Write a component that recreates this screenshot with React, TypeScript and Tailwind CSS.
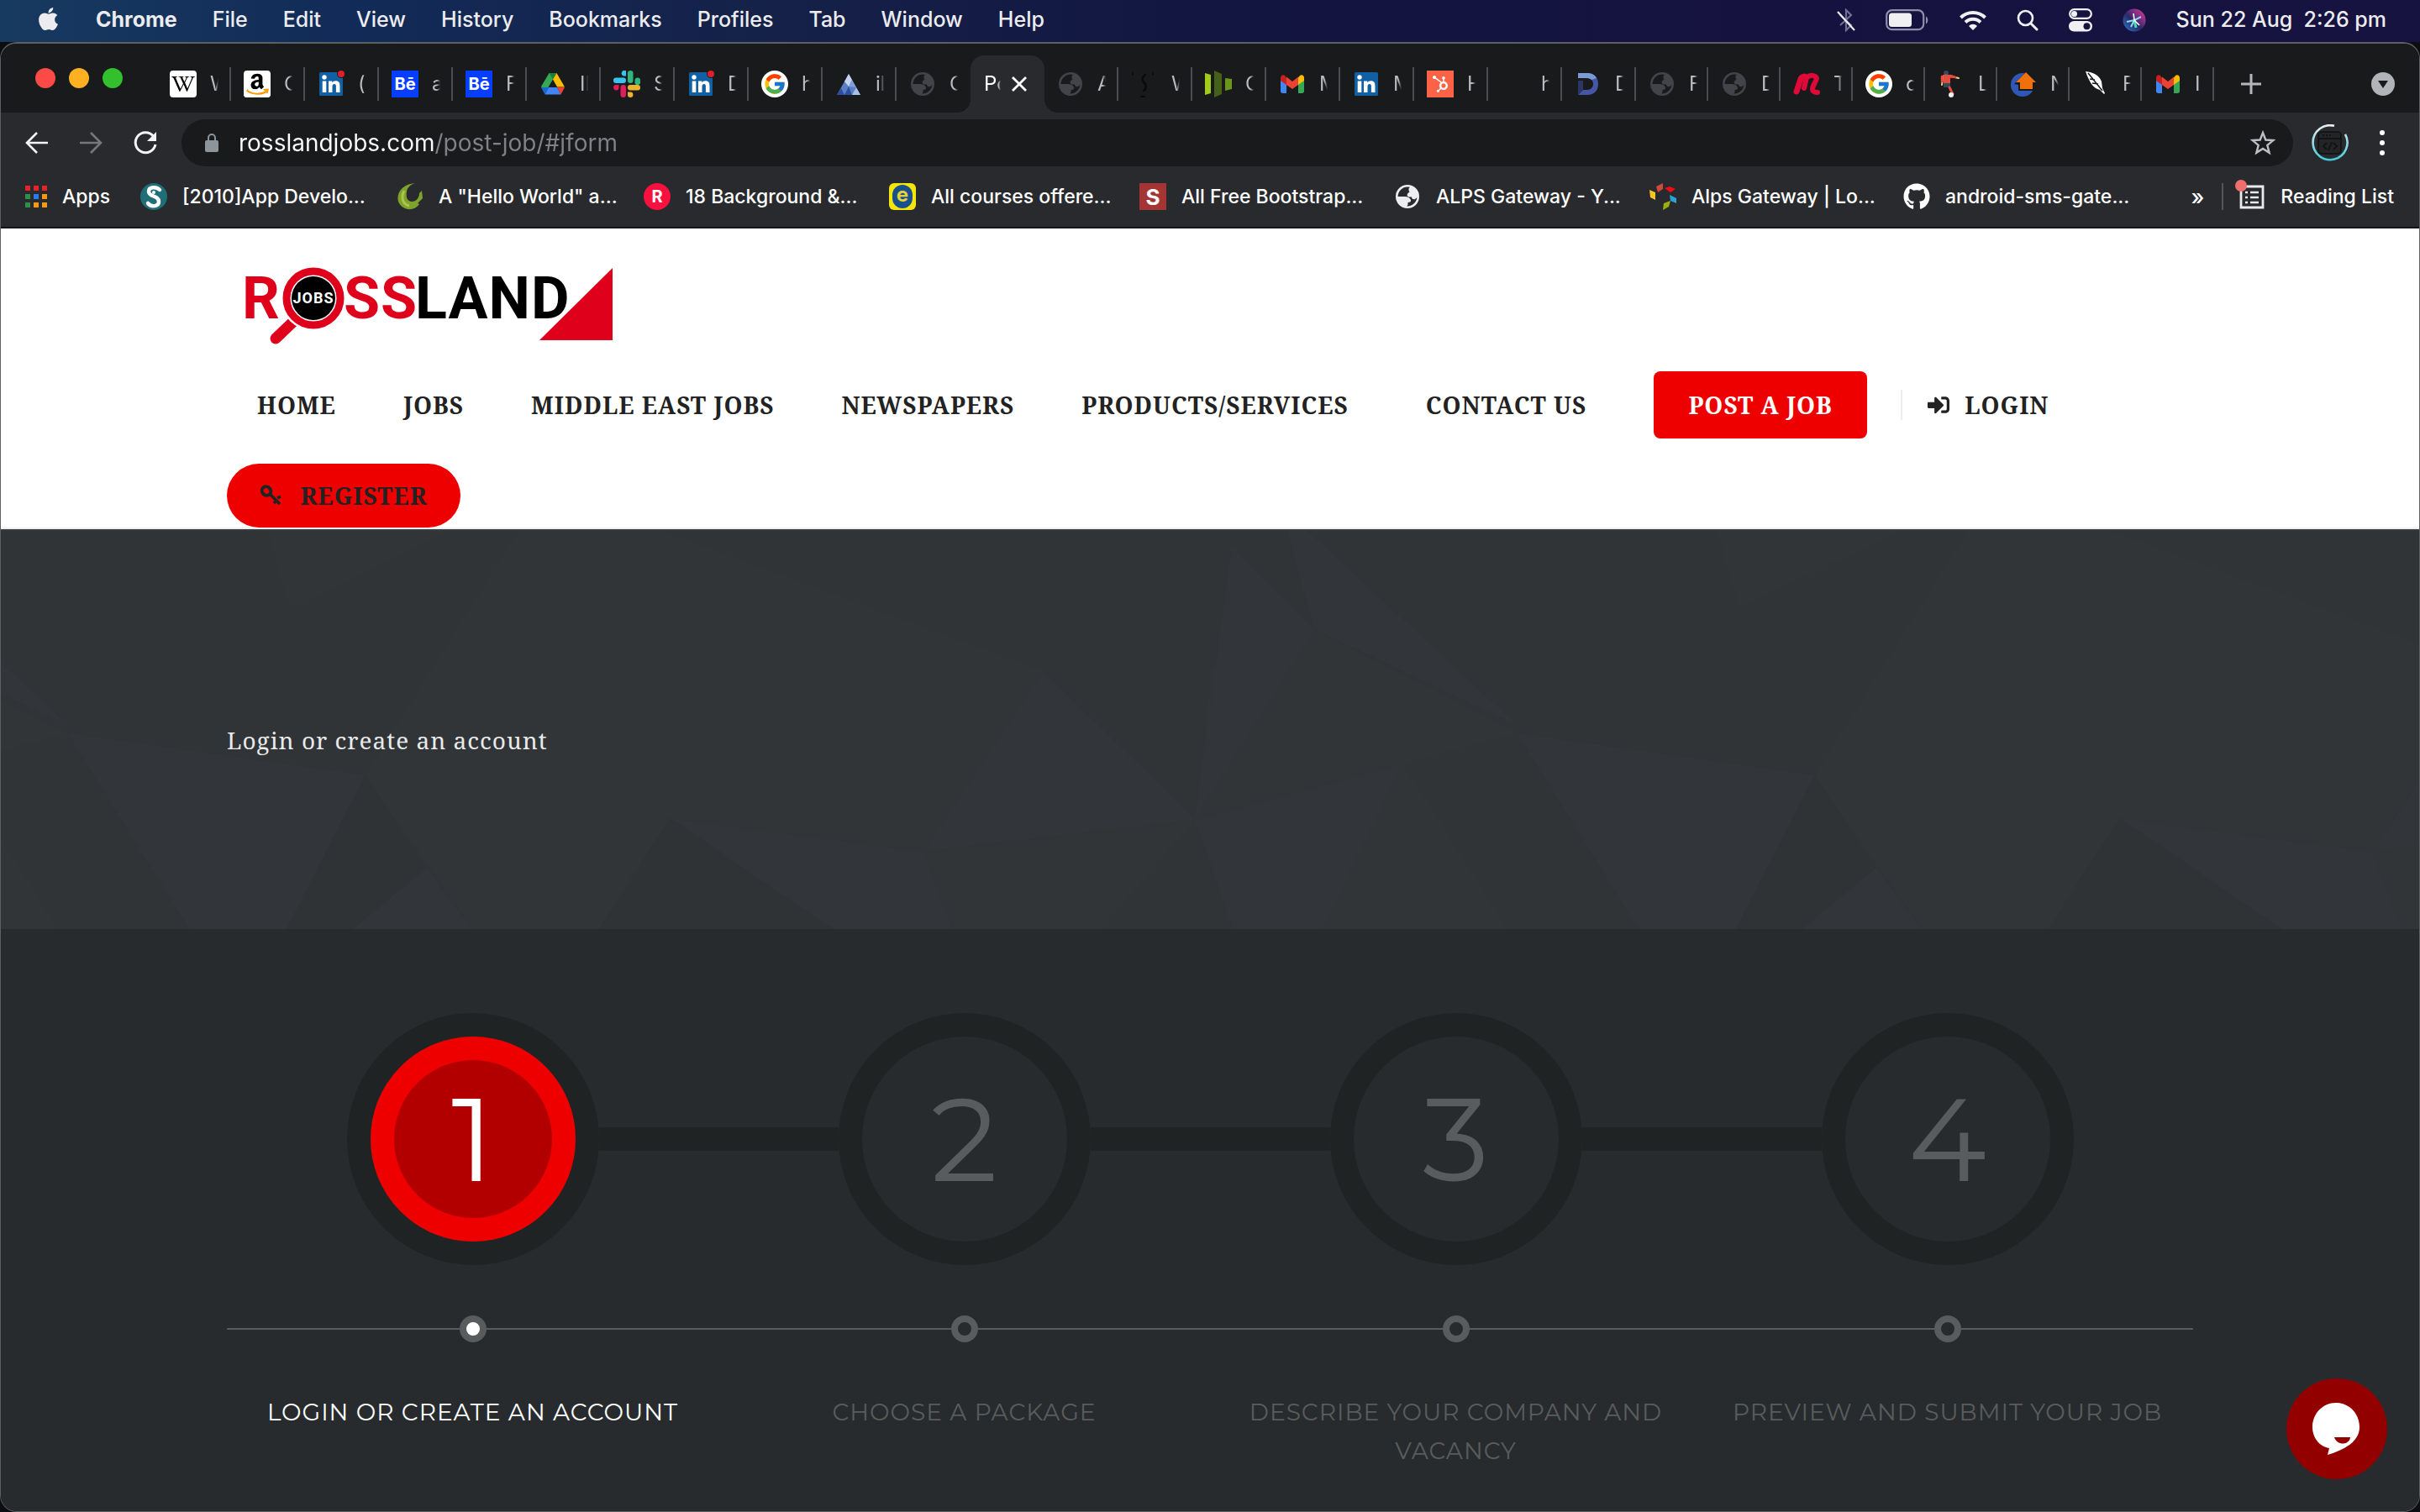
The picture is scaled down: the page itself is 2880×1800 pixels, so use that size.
import type { ReactNode } from 'react';
import { FaApple, FaAmazon, FaGithub, FaHubspot, FaSignInAlt, FaWikipediaW } from 'react-icons/fa';
import { FcGoogle } from 'react-icons/fc';

/* ---------- favicons ---------- */

function Globe({ light = false }: { light?: boolean }) {
  return (
    <svg viewBox="0 0 32 32" className={light ? 'size-8 text-[#eceff1]' : 'size-8 text-[#42444a]'}>
      <circle cx="16" cy="16" r="12.7" fill="none" stroke="currentColor" strokeWidth="2.6" />
      <path
        fill="currentColor"
        d="M17.5 6.5 20 3.5c5 1.500 9 6.500 9 12.500l-4 3c-2.500 1-4-.5-4-2.500h-3.500c-2-.5-2.500-2.500-1-4.500l2-1.500c-.8-1-1.200-2.500-1-4Z"
      />
      <path
        fill="currentColor"
        d="M3 16h10c3 0 6 1.500 7 4 .5 2-1 3-3.500 3v2.500l-2 3.500C8 28.500 3 22.500 3 16Z"
      />
    </svg>
  );
}

function Wikipedia() {
  return (
    <span className="flex size-8 items-center justify-center rounded bg-white text-black">
      <FaWikipediaW className="size-7" />
    </span>
  );
}

function Amazon() {
  return (
    <span className="relative flex size-8 items-center justify-center overflow-hidden rounded bg-white text-black">
      <FaAmazon className="size-7" />
      <svg viewBox="0 0 32 32" className="absolute inset-0 size-8">
        <path d="M0 22.500h32V32H0Z" fill="#fff" />
        <path d="M3.500 23.500c7 5.500 18 5.500 24 1" fill="none" stroke="#f90" strokeWidth="2.200" />
        <path d="m24 23 4.800-.5-1 4.500" fill="none" stroke="#f90" strokeWidth="1.800" />
      </svg>
    </span>
  );
}

function LinkedIn({ alert = false }: { alert?: boolean }) {
  return (
    <svg viewBox="0 0 32 32" className="size-8">
      <rect x="2" y="2" width="28" height="28" rx="1.500" fill="#1260a4" />
      <g fill="#fff">
        <circle cx="8" cy="8" r="2.700" />
        <path d="M5.700 12.500h4.600V26H5.700ZM13 12.500h4.300v1.900c.8-1.400 2.300-2.200 4.200-2.200 3.800 0 5 2.300 5 6V26h-4.600v-6.900c0-1.900-.5-3-2-3-1.600 0-2.400 1.100-2.400 3V26H13Z" />
      </g>
      {alert && <circle cx="28" cy="4" r="5" fill="#191a1c" />}
      {alert && <circle cx="28" cy="4" r="4" fill="#df2029" />}
    </svg>
  );
}

function Behance() {
  return (
    <span className="flex size-8 items-center justify-center bg-[#053eff] font-['Inter'] text-xl leading-none font-bold text-white">
      Bē
    </span>
  );
}

function Drive() {
  return (
    <svg viewBox="0 0 32 32" className="size-8">
      <path d="M11.500 3h9l-9.500 16-4.500 8L2 19Z" fill="#34a853" />
      <path d="M11.500 3h9L16 10.500Z" fill="#188038" />
      <path d="m20.500 3 9.500 16.500h-9L16 10.500Z" fill="#fbbc04" />
      <path d="M2 20h9l-4.500 8.500Z" fill="#1967d2" />
      <path d="M11 20h10l4.500 8.500h-19Z" fill="#4285f4" />
      <path d="M21 20h9l-4.500 8.500Z" fill="#ea4335" />
    </svg>
  );
}

function Slack() {
  return (
    <svg viewBox="0 0 32 32" className="size-8">
      <g fill="#36c5f0">
        <rect x="0" y="8.500" width="15" height="6.500" rx="3.200" />
        <path d="M15 0v6.500h-3.200A3.200 3.200 0 0 1 15 0Z" />
      </g>
      <g fill="#2eb67d">
        <rect x="17" y="0" width="6.500" height="15" rx="3.200" />
        <path d="M32 11.800a3.200 3.200 0 0 1-6.500 3.200v-3.200a3.200 3.200 0 0 1 6.500 0Z" />
      </g>
      <g fill="#ecb22e">
        <rect x="17" y="17" width="15" height="6.500" rx="3.200" />
        <path d="M17 25.500h3.200a3.200 3.200 0 1 1-3.200 3.200Z" />
      </g>
      <g fill="#e01e5a">
        <rect x="8.500" y="17" width="6.500" height="15" rx="3.200" />
        <path d="M6.500 17v3.200A3.200 3.200 0 1 1 3.200 17Z" />
      </g>
    </svg>
  );
}

function Google() {
  return (
    <span className="flex size-8 items-center justify-center rounded-full bg-white">
      <FcGoogle className="size-7" />
    </span>
  );
}

function Triangle() {
  return (
    <svg viewBox="0 0 32 32" className="size-8">
      <path d="M16 4 2 29h28Z" fill="#5b7fc4" />
      <path d="M16 4l-5 9 5 6 4-8Z" fill="#c4d4ef" />
      <path d="M2 29l5-8 4 8ZM11 29l5-10 4 10Z" fill="#2a4ea0" />
      <path d="m20 11 5 9-9-1Z" fill="#7f9fd8" />
      <path d="m20 29 5-9 5 9Z" fill="#a9bfe6" />
    </svg>
  );
}

function Sketch() {
  return (
    <svg viewBox="0 0 32 32" className="size-8" fill="none" stroke="#0b0b0c" strokeLinecap="round">
      <path strokeWidth="1.500" d="M2 2v3M26 2v3" />
      <path strokeWidth="2.500" d="M17 5c-5 4-4 7-1 10s2 7-1 9M12 31h4" />
    </svg>
  );
}

function Envato() {
  return (
    <svg viewBox="0 0 32 32" className="size-8">
      <path d="m0 3 7 2v22l-7 2Z" fill="#a2cc1c" />
      <path d="m11 0 9 4v24l-9 4Z" fill="#45601a" />
      <path d="m24 9 8 1v12l-8 2Z" fill="#6a961c" />
    </svg>
  );
}

function Gmail() {
  return (
    <svg viewBox="0 0 32 32" className="size-8">
      <path d="M2 10v14.500C2 26 3 27 4.500 27H9V13Z" fill="#4285f4" />
      <path d="M30 10v14.500c0 1.500-1 2.500-2.500 2.500H23V13Z" fill="#34a853" />
      <path d="M23 8.500 25 6c2-1.500 5-.5 5 3v3l-7 5Z" fill="#fbbc04" />
      <path d="M2 12V9c0-3.500 3-4.500 5-3l2 2.500V17Z" fill="#c5221f" />
      <path d="M9 17V7.500l7 5.500 7-5.500V17l-7 5Z" fill="#ea4335" />
    </svg>
  );
}

function HubSpot() {
  return (
    <span className="flex size-8 items-center justify-center bg-[#fa6347] text-white">
      <FaHubspot className="size-5" />
    </span>
  );
}

function LetterD() {
  return (
    <svg viewBox="0 0 32 32" className="size-8">
      <path d="M4 3h11c8 0 13 5 13 13s-5 13-13 13H4l6-6h5c4 0 7-3 7-7s-3-7-7-7H4Z" fill="#4656a6" />
      <path d="M4 3h11c5 0 9 2 11 6l-6 2c-1-1-3-2-5-2H4Z" fill="#7c9bd6" />
      <path d="M4 12h6v11l-6 6Z" fill="#2c3566" />
    </svg>
  );
}

function Meetup() {
  return (
    <svg viewBox="0 0 32 32" className="size-8" fill="none" stroke="#e0093a" strokeLinecap="round" strokeLinejoin="round">
      <path strokeWidth="7" d="M4 25 9 10" />
      <path strokeWidth="6" d="M9 9c2-3 5-3 7-1l-3 13M17 8c3-3 9-3 11 1-1 5-5 9-5 13 0 3 3 4 6 4" />
    </svg>
  );
}

function Player() {
  return (
    <svg viewBox="0 0 32 32" className="size-8" fill="none" strokeLinecap="round">
      <circle cx="10" cy="3" r="3" fill="#34495e" />
      <path d="M6 7c3-2 8-1 10 0l9 2M6 8l-1 9" stroke="#f7cd8c" strokeWidth="2" />
      <path d="M6 5h9l5 3-5 1v6H7Z" fill="#e64c3c" />
      <path d="M7 15h8v5H7Z" fill="#34495e" />
      <path d="m14 20 4 8" stroke="#e64c3c" strokeWidth="3" />
      <path d="M5 7v6M15 6l6 2" stroke="#e64c3c" strokeWidth="2.500" />
      <circle cx="16" cy="29" r="3" fill="#ecf0f1" />
    </svg>
  );
}

function HomeArrow() {
  return (
    <svg viewBox="0 0 32 32" className="size-8">
      <circle cx="15" cy="17" r="14" fill="#2f57b5" />
      <path d="m20 1 13 13-3 3v7H10v-7l-5-1Z" fill="#191a1c" />
      <path d="m19 2 12 12h-4v8H12v-8H7Z" fill="#f0700c" />
    </svg>
  );
}

function Feather() {
  return (
    <svg viewBox="0 0 32 32" className="size-8">
      <path d="M4 1c9 1 16 4 19 12l1 8 3 6-1 1-5-5c-8-2-12-8-17-22Z" fill="#fff" />
      <path d="m7 3 17 21M9 10l6 1M12 15l7 1" stroke="#191a1c" strokeWidth="1.500" />
    </svg>
  );
}

/* ---------- tab strip ---------- */

type TabItem = { icon: ReactNode; title: string; active?: boolean; bare?: boolean; slim?: boolean };

const tabs: TabItem[] = [
  { icon: <Wikipedia />, title: 'W' },
  { icon: <Amazon />, title: 'C' },
  { icon: <LinkedIn alert />, title: '(' },
  { icon: <Behance />, title: 'a' },
  { icon: <Behance />, title: 'F' },
  { icon: <Drive />, title: 'IN' },
  { icon: <Slack />, title: 'S' },
  { icon: <LinkedIn alert />, title: 'D' },
  { icon: <Google />, title: 'h' },
  { icon: <Triangle />, title: 'il' },
  { icon: <Globe />, title: 'C', bare: true },
  { icon: null, title: 'Po', active: true },
  { icon: <Globe />, title: 'A' },
  { icon: <Sketch />, title: 'W' },
  { icon: <Envato />, title: 'C' },
  { icon: <Gmail />, title: 'M' },
  { icon: <LinkedIn />, title: 'M' },
  { icon: <HubSpot />, title: 'H' },
  { icon: <span className="size-8" />, title: 'h' },
  { icon: <LetterD />, title: 'D' },
  { icon: <Globe />, title: 'F', slim: true },
  { icon: <Globe />, title: 'D', slim: true },
  { icon: <Meetup />, title: 'T', slim: true },
  { icon: <Google />, title: 'c', slim: true },
  { icon: <Player />, title: 'L', slim: true },
  { icon: <HomeArrow />, title: 'N', slim: true },
  { icon: <Feather />, title: 'F', slim: true },
  { icon: <Gmail />, title: 'I', slim: true },
];

function Tab({ tab }: { tab: TabItem }) {
  if (tab.active) {
    return (
      <div className="relative flex h-[68px] w-[88px] items-center rounded-t-2xl bg-[#292a2d] pl-4 text-white before:absolute before:bottom-0 before:-left-4 before:size-4 before:bg-[radial-gradient(circle_at_0_0,transparent_16px,#292a2d_16px)] after:absolute after:-right-4 after:bottom-0 after:size-4 after:bg-[radial-gradient(circle_at_100%_0,transparent_16px,#292a2d_16px)]">
        <span className="w-5 overflow-hidden mask-r-from-80%">{tab.title}</span>
        <button aria-label="Close tab" className="ml-3">
          <svg viewBox="0 0 20 20" className="size-5" stroke="#fff" strokeWidth="2.800">
            <path d="m2 2 16 16M18 2 2 18" />
          </svg>
        </button>
      </div>
    );
  }
  return (
    <button className={`flex h-[68px] items-center pl-[15px] text-[#b9bcc1] ${tab.slim ? 'w-[86px]' : 'w-[88px]'}`}>
      {tab.icon}
      <span className="ml-4 w-2.5 overflow-hidden text-left mask-r-from-60%">{tab.title}</span>
      {!tab.bare && <span className="ml-auto h-10 w-0.5 bg-[#4a4c50]" />}
    </button>
  );
}

/* ---------- bookmarks ---------- */

const bookmarks: { icon: ReactNode; label: string; width: string }[] = [
  {
    width: 'w-[137px]',
    label: 'Apps',
    icon: (
      <svg viewBox="0 0 26 28" className="h-7 w-[26px]">
        <path fill="#e8212b" d="M0 1h6v6H0ZM10 1h6v6h-6ZM20 1h6v6h-6Z" />
        <path fill="#2f8f46" d="M0 11h6v6H0ZM0 21h6v6H0Z" />
        <path fill="#2a7bf0" d="M10 11h6v6h-6Z" />
        <path fill="#f29a12" d="M20 11h6v6h-6ZM10 21h6v6h-6ZM20 21h6v6h-6Z" />
      </svg>
    ),
  },
  {
    width: 'w-[305px]',
    label: '[2010]App Develo...',
    icon: (
      <svg viewBox="0 0 32 32" className="size-8">
        <circle cx="16" cy="16" r="16" fill="#1f6f78" />
        <path
          d="M23 8c-4-4-13-4-13 2 0 7 12 4 12 12 0 6-9 7-13 2"
          fill="none"
          stroke="#fff"
          strokeWidth="4.500"
          strokeLinecap="round"
        />
        <circle cx="16" cy="11" r="2" fill="#fff" />
      </svg>
    ),
  },
  {
    width: 'w-[294px]',
    label: 'A "Hello World" a...',
    icon: (
      <svg viewBox="0 0 32 32" className="size-8">
        <path d="M22 0C8 1-1 11 2 22c4 10 18 13 25 3l-2-1 6-6-1-9-3 3c0 6-4 10-9 10-6-1-7-6-6-12 1-5 4-8 10-10Z" fill="#7da32b" />
        <path d="M9 9c-4 8-2 16 6 18" fill="none" stroke="#a9c64a" strokeWidth="3" />
      </svg>
    ),
  },
  {
    width: 'w-[292px]',
    label: '18 Background &...',
    icon: (
      <span className="flex size-8 items-center justify-center rounded-full bg-[#f8103f] text-xl font-bold text-white">
        R
      </span>
    ),
  },
  {
    width: 'w-[298px]',
    label: 'All courses offere...',
    icon: (
      <span className="flex size-8 items-center justify-center rounded-md bg-[#f4e60a]">
        <span className="flex h-7 w-6 items-center justify-center rounded-full bg-[#17508c] pb-1 text-2xl leading-none font-bold text-[#e5cf3a]">
          e
        </span>
      </span>
    ),
  },
  {
    width: 'w-[303px]',
    label: 'All Free Bootstrap...',
    icon: (
      <span className="flex size-8 items-center justify-center bg-[#a33635] text-[26px] font-bold text-white">S</span>
    ),
  },
  { width: 'w-[304px]', label: 'ALPS Gateway - Y...', icon: <Globe light /> },
  {
    width: 'w-[302px]',
    label: 'Alps Gateway | Lo...',
    icon: (
      <svg viewBox="0 0 32 32" className="size-8">
        <path d="m0 8 7 3v9l-6-3Z" fill="#f5c526" />
        <path d="m8 4 8-4v7l-6 4Z" fill="#cf4a3c" />
        <path d="m18 6 6-2 7 3-6 4Z" fill="#f20a14" />
        <path d="m24 14 8 4v6l-7-3Z" fill="#2ba3d6" />
        <path d="m17 24 8-3-2 7-7 4Z" fill="#9bb00f" />
      </svg>
    ),
  },
  { width: 'w-[280px]', label: 'android-sms-gate...', icon: <FaGithub className="size-8 text-white" /> },
];

/* ---------- system menu bar ---------- */

function MenuBar() {
  return (
    <header className="flex h-[50px] items-center bg-[linear-gradient(90deg,#173a60_0%,#122b58_14%,#152148_32%,#121640_50%,#15123f_72%,#171340_100%)] pr-10 pb-0.5 pl-[42px] text-[25px] font-medium text-[#ececee]">
      <FaApple className="mr-[41px] mb-1 size-[31px]" />
      <nav className="flex gap-[42px]">
        <button className="font-bold">Chrome</button>
        {['File', 'Edit', 'View', 'History', 'Bookmarks', 'Profiles', 'Tab', 'Window', 'Help'].map((m) => (
          <button key={m}>{m}</button>
        ))}
      </nav>
      <div className="ml-auto flex items-center gap-9">
        <svg viewBox="0 0 22 28" className="h-7 w-[22px]" fill="none" strokeWidth="2.200">
          <path d="m4 8 13 12-6 6V2l6 6L4 20" stroke="#6f7090" />
          <path d="m1 4 20 22" stroke="#ececee" />
        </svg>
        <svg viewBox="0 0 52 26" className="h-[26px] w-[52px]">
          <rect x="1.200" y="1.200" width="44" height="23" rx="6.500" fill="none" stroke="#8e8ea6" strokeWidth="2.200" />
          <rect x="4" y="4.500" width="27" height="16.500" rx="3.500" fill="#f0f0f2" />
          <path d="M48 8.500c3 1 3 8 0 9Z" fill="#8e8ea6" />
        </svg>
        <svg viewBox="0 0 32 24" className="h-6 w-8" fill="none" stroke="#f0f0f2" strokeWidth="4">
          <path d="M1.500 9c8-8 21-8 29 0M7 14.500c5-5 13-5 18 0" />
          <path d="m16 24-5-5c3-3 7-3 10 0Z" fill="#f0f0f2" stroke="none" />
        </svg>
        <svg viewBox="0 0 26 26" className="size-[26px]" fill="none" stroke="#f0f0f2" strokeLinecap="round">
          <circle cx="10.500" cy="10.500" r="8.500" strokeWidth="2.600" />
          <path d="m17 17 7 7" strokeWidth="3" />
        </svg>
        <svg viewBox="0 0 28 28" className="size-7">
          <rect x="1.200" y="1.200" width="25.600" height="10.600" rx="5.300" fill="none" stroke="#f0f0f2" strokeWidth="2.200" />
          <circle cx="6.500" cy="6.500" r="3.500" fill="#f0f0f2" />
          <rect y="15" width="28" height="12.500" rx="6.200" fill="#f0f0f2" />
          <circle cx="21.500" cy="21.200" r="4" fill="#171340" />
        </svg>
        <svg viewBox="0 0 28 28" className="size-7">
          <defs>
            <linearGradient id="orb" x1="0" y1="1" x2="1" y2="0">
              <stop offset="0" stopColor="#2b7fd0" />
              <stop offset="0.450" stopColor="#2a2a66" />
              <stop offset="0.700" stopColor="#8a2f86" />
              <stop offset="1" stopColor="#d0458a" />
            </linearGradient>
          </defs>
          <circle cx="14" cy="14" r="13.500" fill="url(#orb)" />
          <path d="m14 14 2 9" stroke="#45e0b0" strokeWidth="3" />
          <path d="m14 14-9 2M14 14l8-4M14 14l-4 8" stroke="#8fd8f2" strokeWidth="2" />
          <path d="m14 14-1-8M14 14l6 6" stroke="#fff" strokeWidth="1.600" />
        </svg>
        <time className="whitespace-pre">Sun 22 Aug  2:26 pm</time>
      </div>
    </header>
  );
}

/* ---------- browser chrome ---------- */

function BrowserChrome() {
  return (
    <div className="bg-[#292a2d]">
      <div className="flex h-[82px] items-end bg-[#191a1c] pl-[41px] text-2xl">
        <div className="mr-[41px] flex gap-4 self-center">
          <button aria-label="Close window" className="size-6 rounded-full bg-[#fc4a46]" />
          <button aria-label="Minimise window" className="size-6 rounded-full bg-[#fdb022]" />
          <button aria-label="Zoom window" className="size-6 rounded-full bg-[#32c12c]" />
        </div>
        {tabs.map((tab, i) => (
          <Tab key={i} tab={tab} />
        ))}
        <button aria-label="New tab" className="mb-[22px] ml-8">
          <svg viewBox="0 0 24 24" className="size-6" stroke="#b4b8bd" strokeWidth="3">
            <path d="M12 0v24M0 12h24" />
          </svg>
        </button>
        <button aria-label="Search tabs" className="mr-[29px] mb-5 ml-auto">
          <svg viewBox="0 0 28 28" className="size-7">
            <circle cx="14" cy="14" r="14" fill="#b1b5ba" />
            <path d="M8 10h12l-6 9Z" fill="#191a1c" />
          </svg>
        </button>
      </div>

      <div className="flex items-center pt-2 pr-10 pl-[29px]">
        <button aria-label="Back" className="mr-9">
          <svg viewBox="0 0 28 28" className="size-7" fill="none" stroke="#f1f3f4" strokeWidth="2.600">
            <path d="M27 14H3M14 2 2 14l12 12" />
          </svg>
        </button>
        <button aria-label="Forward" className="mr-9">
          <svg viewBox="0 0 28 28" className="size-7" fill="none" stroke="#76777a" strokeWidth="2.600">
            <path d="M1 14h24M14 2l12 12-12 12" />
          </svg>
        </button>
        <button aria-label="Reload" className="mr-7">
          <svg viewBox="0 0 30 30" className="size-[30px]">
            <path d="M24.500 7A12 12 0 1 0 27 17" fill="none" stroke="#f1f3f4" strokeWidth="3" />
            <path d="M28 2v11H17Z" fill="#f1f3f4" />
          </svg>
        </button>
        <div className="flex h-14 flex-1 items-center rounded-full bg-[#191a1c] pr-5 pl-7">
          <svg viewBox="0 0 16 22" className="mr-6 h-[22px] w-4">
            <rect y="8" width="16" height="14" rx="2" fill="#8d949a" />
            <path d="M4 9V5a4 4 0 0 1 8 0v4" fill="none" stroke="#8d949a" strokeWidth="2" />
          </svg>
          <input
            aria-label="Address"
            defaultValue="rosslandjobs.com/post-job/#jform"
            className="flex-1 bg-[linear-gradient(90deg,#fff_234px,#808386_234px)] bg-clip-text text-[28px] text-transparent outline-none"
          />
          <button aria-label="Bookmark this page">
            <svg viewBox="0 0 32 32" className="size-8" fill="none" stroke="#bdbfc2" strokeWidth="2.400">
              <path d="m16 4 3.300 8.500 9 .6-7 5.800 2.300 8.900L16 22.900l-7.600 4.900 2.300-8.900-7-5.800 9-.6Z" />
            </svg>
          </button>
        </div>
        <button aria-label="Profile" className="mr-9 ml-[22px]">
          <svg viewBox="0 0 44 44" className="size-11" fill="none">
            <defs>
              <linearGradient id="ring" x1="0" y1="0" x2="0" y2="1">
                <stop offset="0" stopColor="#e8eef0" />
                <stop offset="1" stopColor="#45c9dd" />
              </linearGradient>
            </defs>
            <path d="M27 1.800a20.500 20.500 0 1 0 13 10" stroke="url(#ring)" strokeWidth="2.600" />
            <rect x="8" y="9" width="27" height="26" rx="4" fill="#232426" stroke="#141516" strokeWidth="2" />
            <path d="M8 17h27M13 13h2M17 13h2M21 13h2M18 22l-4 4 4 4M26 22l4 4-4 4M24 21l-4 10" stroke="#121314" strokeWidth="2" />
          </svg>
        </button>
        <button aria-label="Menu" className="flex w-2 flex-col items-center gap-1.5">
          <span className="size-1.5 rounded-full bg-white" />
          <span className="size-1.5 rounded-full bg-white" />
          <span className="size-1.5 rounded-full bg-white" />
        </button>
      </div>

      <div className="flex h-[74px] items-center border-b-2 border-[#141415] pr-[30px] pl-[29px] text-[23px] font-medium text-white">
        {bookmarks.map((b) => (
          <a key={b.label} href="#bookmark" className={`flex items-center gap-[18px] whitespace-nowrap ${b.width}`}>
            {b.icon}
            {b.label}
          </a>
        ))}
        <button className="ml-auto text-[26px]" aria-label="More bookmarks">
          »
        </button>
        <span className="mr-[18px] ml-[21px] h-8 w-0.5 bg-[#54565a]" />
        <button className="flex items-center gap-[18px]">
          <span className="relative size-8">
            <svg viewBox="0 0 32 32" className="size-8" fill="none" stroke="#e8eaed" strokeWidth="2.800">
              <path d="M3 4h26v25H3Z" />
              <path d="M8 11h3M14 11h10M8 17h3M14 17h10M8 23h3M14 23h10" strokeWidth="2.400" />
            </svg>
            <span className="absolute -top-1 -left-1 size-3.5 rounded-full bg-[#ee6f6c]" />
          </span>
          Reading List
        </button>
      </div>
    </div>
  );
}

/* ---------- site ---------- */

function Logo() {
  return (
    <svg viewBox="0 0 440 92" className="h-[92px] w-[440px]" role="img" aria-label="Rossland Jobs">
      <g className="font-['Roboto'] text-[70px] font-bold">
        <text x="-2" y="61" fill="#df001b">
          R
        </text>
        <text x="119" y="61" fill="#df001b">
          SS
        </text>
        <text x="204" y="61" fill="#000">
          LAND
        </text>
      </g>
      <path d="M439 0v88h-88Z" fill="#fff" stroke="#fff" strokeWidth="5" />
      <path d="M439 1v86h-87Z" fill="#df001b" />
      <path d="M60 64 38 86" stroke="#fff" strokeWidth="18" strokeLinecap="round" />
      <path d="M60 64 38 85" stroke="#df001b" strokeWidth="13" strokeLinecap="round" />
      <circle cx="83" cy="37" r="39" fill="#fff" />
      <circle cx="83" cy="37" r="32" fill="#fff" stroke="#df001b" strokeWidth="9" />
      <circle cx="83" cy="37" r="26" fill="#000" />
      <text x="83" y="43" textAnchor="middle" fill="#fff" className="font-['Roboto'] text-[18px]">
        JOBS
      </text>
    </svg>
  );
}

function SiteHeader() {
  return (
    <header className="border-b-2 border-[#eef0f0] bg-white">
      <div className="mx-auto w-full max-w-[2340px] pt-[46px] font-['Noto_Serif','DejaVu_Serif_Condensed',serif] text-[28px] font-bold tracking-[1px] text-[#222]">
        <a href="#home" className="ml-5 block w-fit">
          <Logo />
        </a>
        <nav className="mt-8 flex h-20 items-center gap-20 pl-9 whitespace-nowrap">
          <a href="#home">HOME</a>
          <a href="#jobs">JOBS</a>
          <a href="#middle-east">MIDDLE EAST JOBS</a>
          <a href="#newspapers">NEWSPAPERS</a>
          <a href="#products">PRODUCTS/SERVICES</a>
          <a href="#contact" className="ml-3">
            CONTACT US
          </a>
          <a href="#post" className="flex h-20 w-[254px] items-center justify-center rounded-lg bg-[#ef0000] text-white">
            POST A JOB
          </a>
          <a href="#login" className="-ml-10 flex items-center gap-[18px]">
            <span className="mr-3 h-9 w-0.5 bg-[#ececec]" />
            <FaSignInAlt className="size-[26px]" />
            LOGIN
          </a>
        </nav>
        <a
          href="#register"
          className="mt-[30px] flex h-[76px] w-[278px] items-center justify-center gap-[22px] rounded-full bg-[#ef0000]"
        >
          <svg viewBox="0 0 26 26" className="size-[26px]" fill="none" stroke="#222" strokeWidth="4">
            <ellipse cx="8" cy="7.500" rx="5.500" ry="5" transform="rotate(45 8 7.500)" />
            <path d="m12 11 12 12M17 22l4-4M21 16l4-2" strokeWidth="3.600" />
          </svg>
          REGISTER
        </a>
      </div>
    </header>
  );
}

const TILE = 1726;

function Facets({ id }: { id: string }) {
  return (
    <g id={id}>
      <g fill="#313538">
        <path d="M434 292 617 0h83l398 383-301-40ZM785 0h-85l398 383 144-215ZM317 0h220L344 93Z" />
        <path d="M434 292 797 343 712 476H562ZM1098 383l324-38-113 131h-175Z" />
        <path d="M1564 118l242 124-136 36-248 67 20-180ZM1670 278l-97 198h221Z" />
      </g>
      <g fill="#32363a">
        <path d="M80 242 434 292 340 476H225ZM507 402 418 476h144ZM797 343l301 40 36 93H992Z" />
        <path d="M1242 168l180 177-324 38ZM1466 20l98 98-142 227ZM1532 0h23l251 232-242-114Z" />
        <path d="M1670 278 1573 476H1468l-46-131Z" />
      </g>
      <path d="M434 292 340 476h78l89-74ZM797 343 712 476h280Z" fill="#2f3336" />
    </g>
  );
}

function Hero() {
  return (
    <section className="relative flex h-[476px] items-center overflow-hidden border-t-2 border-[#383c3f] bg-[#303437] pt-6">
      <svg viewBox="0 0 2880 476" preserveAspectRatio="xMidYMid slice" className="absolute inset-0 size-full" aria-hidden="true">
        <Facets id="facets" />
        <use href="#facets" x={TILE} />
        <use href="#facets" x={-TILE} />
      </svg>
      <p className="relative mx-auto w-full max-w-[2340px] font-['Noto_Serif','DejaVu_Serif_Condensed',serif] text-[28px] tracking-[1px] text-[#e9eaea]">
        Login or create an account
      </p>
    </section>
  );
}

const steps = [
  'LOGIN OR CREATE AN ACCOUNT',
  'CHOOSE A PACKAGE',
  'DESCRIBE YOUR COMPANY AND VACANCY',
  'PREVIEW AND SUBMIT YOUR JOB',
];

function Steps() {
  const last = steps.length - 1;
  return (
    <section className="flex-1 bg-[#272b2d] pt-[100px] font-['Montserrat','Inter',sans-serif]">
      <ol className="mx-auto grid w-full max-w-[2340px] grid-cols-4">
        {steps.map((label, i) => (
          <li key={label} className={i === 0 ? 'text-white' : 'text-[#585c5d]'}>
            <div className="flex items-center">
              <span className={i === 0 ? 'h-7 flex-1' : 'h-7 flex-1 bg-[#1f2323]'} />
              <div className="size-[300px] rounded-full border-[28px] border-[#1f2323]">
                <div
                  className={`flex size-full items-center justify-center rounded-full text-[140px] leading-none ${
                    i === 0 ? 'border-[28px] border-[#ef0000] bg-[#b20000]' : ''
                  }`}
                >
                  {i + 1}
                </div>
              </div>
              <span className={i === last ? 'h-7 flex-1' : 'h-7 flex-1 bg-[#1f2323]'} />
            </div>
            <div className="mt-[60px] flex items-center">
              <span className="h-0.5 flex-1 bg-[#585c5d]" />
              <span className={`size-8 rounded-full border-8 border-[#585c5d] ${i === 0 ? 'bg-white' : ''}`} />
              <span className="h-0.5 flex-1 bg-[#585c5d]" />
            </div>
            <p className="mt-[60px] px-8 text-center text-[28px] leading-[46px] tracking-[1px]">{label}</p>
          </li>
        ))}
      </ol>
    </section>
  );
}

export default function App() {
  return (
    <div className="flex min-h-screen flex-col bg-[#0c0d12] font-['Inter',sans-serif]">
      <MenuBar />
      <div className="relative flex flex-1 flex-col overflow-hidden rounded-[20px] border border-t-2 border-[#5d6062]">
        <BrowserChrome />
        <SiteHeader />
        <Hero />
        <Steps />
        <button
          aria-label="Open chat"
          className="absolute right-[38px] bottom-[38px] flex size-[120px] items-center justify-center rounded-full bg-[#920000]"
        >
          <svg viewBox="0 0 60 64" className="h-16 w-[60px]">
            <path d="M29 1c16 0 28 13 28 29 0 15-14 26-38 33l2-8C9 53 1 42 1 30 1 14 13 1 29 1Z" fill="#fff" />
            <path d="M27 42h19c-1 10-16 10-19 0Z" fill="#920000" />
          </svg>
        </button>
      </div>
    </div>
  );
}
